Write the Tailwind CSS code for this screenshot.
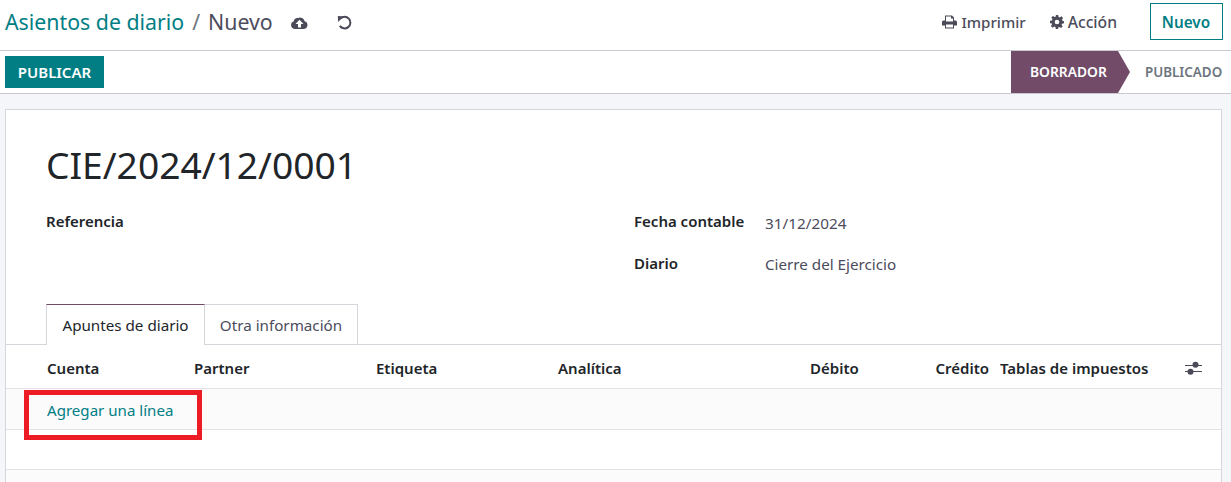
<!doctype html>
<html>
<head>
<meta charset="UTF-8">
<script src="https://cdn.jsdelivr.net/npm/@tailwindcss/browser@4"></script>
</head>
<body class="h-[482px] w-[1231px] overflow-hidden bg-[#f5f6fa] font-['Noto_Sans',sans-serif] text-[#212529]">
  <!-- breadcrumb bar -->
  <header class="flex h-[51px] items-center border-b border-[#c9c9d1] bg-white pb-[7px] pl-[5px] pr-[8px]">
    <div class="flex items-center text-[21.300px] leading-[28px]">
      <span class="text-[#017e84]">Asientos de diario</span>
      <span class="ml-[8px] text-[#6c757d]">/</span>
      <span class="ml-[8px] text-[#4c4c5c]">Nuevo</span>
    </div>
    <svg class="ml-[18px] mt-[2px] h-[13px] w-[17px]" viewBox="0 0 17 13"><path fill="#4a4a58" d="M4 13a4 4 0 0 1-1.200-7.800A3.500 3.500 0 0 1 7 2 4.800 4.800 0 0 1 13.600 5.200 4 4 0 0 1 13 13z"/><path fill="#fff" d="M8.500 3.800 12.500 8H10v3.500H7V8H4.500z"/></svg>
    <svg class="ml-[29px] mt-[1px] h-[15px] w-[15px]" viewBox="0 0 15 15" fill="none" stroke="#4a4a58" stroke-width="2"><path d="M3.300 3.700a5.800 5.800 0 1 1-.5 7.200"/><path fill="#4a4a58" stroke="none" d="M0.800 1 6.500 1.500 1.200 7z"/></svg>
    <div class="ml-auto flex items-center text-[15.100px] font-medium text-[#4c4c5c]">
      <svg class="mr-[4px] mt-[1px] h-[14px] w-[15px]" viewBox="0 0 15 13"><path fill="#4a4a58" d="M3 0h7l2 2v3h1.500A1.500 1.500 0 0 1 15 6.500V10h-3v3H3v-3H0V6.500A1.500 1.500 0 0 1 1.500 5H3zm1 1v5h7V3H9V1zm0 8v3h7V9z"/></svg>
      <span class="mt-[2px]">Imprimir</span>
      <svg class="ml-[24px] mr-[4px] mt-[1px] h-[14px] w-[14px]" viewBox="0 0 24 24"><path fill="#4a4a58" fill-rule="evenodd" d="M10 0h4l.7 3.400 2 .8L19.600 2.300l2.800 2.800-1.900 2.900.8 2L24 10.700v3.400l-3.400.7-.8 2 1.900 2.900-2.800 2.800-2.900-1.900-2 .8L14 24h-4l-.7-3.400-2-.8-2.900 1.900-2.800-2.800 1.900-2.900-.8-2L0 14v-4l3.400-.7.800-2-1.900-2.900 2.800-2.800 2.900 1.900 2-.8zM12 8a4 4 0 1 0 0 8 4 4 0 0 0 0-8z"/></svg>
      <span class="mt-[2px] text-[15.700px]">Acción</span>
      <button class="ml-[33px] h-[37px] w-[73px] border border-[#017e84] pr-[1px] pt-[1px] text-[15.300px] font-semibold text-[#017e84]">Nuevo</button>
    </div>
  </header>

  <!-- status bar -->
  <div class="flex h-[43px] items-center justify-between border-b border-[#c9c9d1] bg-white pl-[5px]">
    <button class="h-[32px] w-[99px] bg-[#017e84] text-[15px] font-semibold text-white">PUBLICAR</button>
    <div class="flex h-[42px] items-center text-[13.800px] font-semibold">
      <div class="flex h-full w-[119px] items-center bg-[#714b67] pl-[19px] text-white [clip-path:polygon(0_0,107px_0,100%_50%,107px_100%,0_100%)]">BORRADOR</div>
      <div class="ml-[15px] w-[86px] overflow-hidden whitespace-nowrap text-[13.400px] text-[#6c757d]">PUBLICADO</div>
    </div>
  </div>

  <!-- form sheet -->
  <main class="relative ml-[5px] mt-[15px] h-[373px] w-[1217px] overflow-hidden border-x border-t border-[#d6d6dc] bg-white">
    <h1 class="ml-[40px] mt-[30px] text-[37.200px] leading-[50px] text-[#212529]">CIE/2024/12/0001</h1>

    <div class="mt-[20px] flex text-[15px] leading-[22px]">
      <div class="ml-[40px] w-[588px] font-semibold">Referencia</div>
      <div class="grid grid-cols-[131px_1fr] gap-y-[18px]">
        <span class="font-semibold">Fecha contable</span>
        <span class="pt-[2px] text-[15.300px] text-[#4c4c5c]">31/12/2024</span>
        <span class="font-semibold">Diario</span>
        <span class="pt-[1px] text-[15.200px] text-[#4c4c5c]">Cierre del Ejercicio</span>
      </div>
    </div>

    <div class="mt-[29px] flex h-[41px] border-b border-[#d6d6dc] pl-[40px] text-[15.200px]">
      <div class="flex h-[41px] w-[159px] items-center justify-center border-x border-t border-[#d6d6dc] border-t-[#714b67] bg-white pt-[1px]">Apuntes de diario</div>
      <div class="flex h-[41px] w-[153px] items-center justify-center border-r border-t border-[#d6d6dc] pt-[1px] text-[#4c4c5c]">Otra información</div>
    </div>

    <div class="grid h-[44px] grid-cols-[147px_182px_182px_252px_50px_129px_1fr] items-center border-b border-[#e2e2e8] pl-[41px] pt-[3px] text-[15px] font-semibold">
      <span>Cuenta</span>
      <span>Partner</span>
      <span>Etiqueta</span>
      <span>Analítica</span>
      <span>Débito</span>
      <span class="text-right">Crédito</span>
      <span class="flex items-center whitespace-nowrap pl-[11px]">Tablas de impuestos
        <svg class="ml-[37px] h-[14px] w-[17px]" viewBox="0 0 17 14"><path stroke="#4a4a58" stroke-width="1" d="M0 4.500h17M0 10.500h17"/><circle cx="10.500" cy="3.800" r="3" fill="#4a4a58"/><circle cx="5.500" cy="10.800" r="3" fill="#4a4a58"/></svg>
      </span>
    </div>
    <div class="flex h-[41px] items-center border-b border-[#e2e2e8] bg-[#fbfbfb] pl-[41px] pt-[2px] text-[15.100px] text-[#017e84]">Agregar una línea</div>
    <div class="h-[40px] border-b border-[#e2e2e8]"></div>
    <div class="h-[13px] bg-[#fbfbfb]"></div>

    <!-- red annotation over the table -->
    <div class="absolute left-[18px] top-[280px] h-[50px] w-[178px] border-[5px] border-[#ed1c24]"></div>
  </main>
</body>
</html>
